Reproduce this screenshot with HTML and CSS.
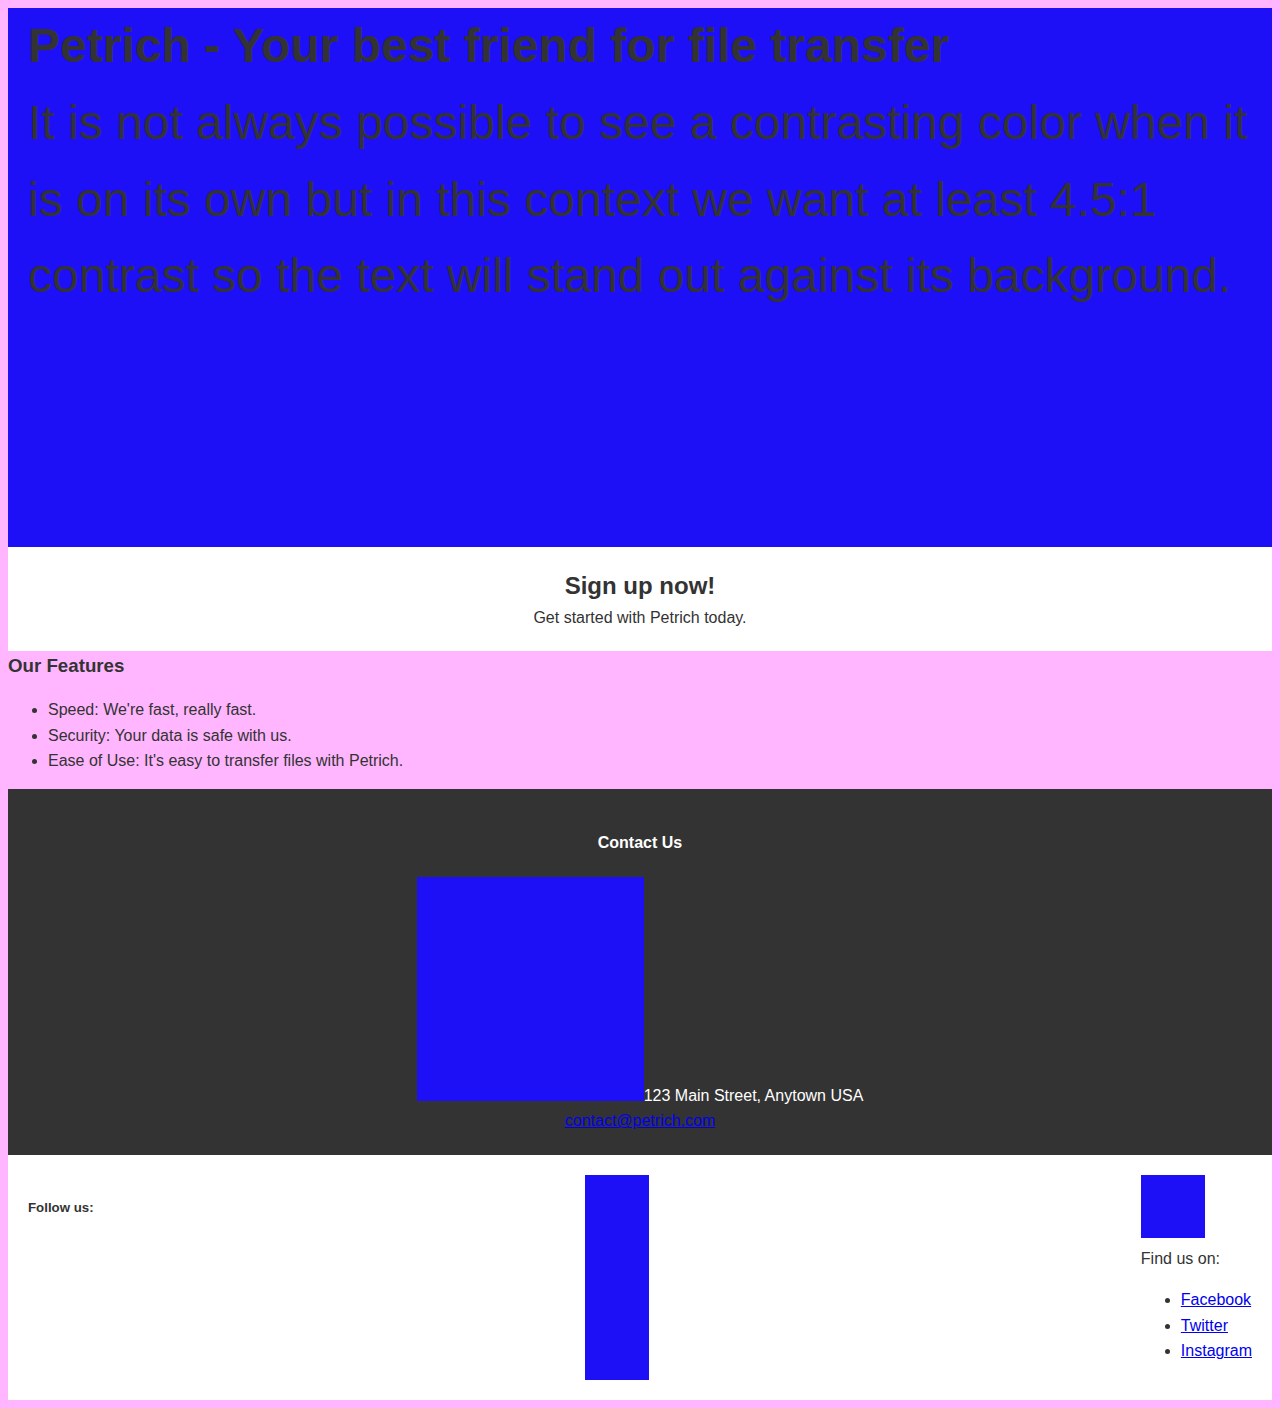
FILE: index.html
```html
<!DOCTYPE html>
<html lang="en">
<head>
<meta charset="utf-8">
<title>Petrich</title>
<link rel="stylesheet" href="styles.css">
</head>
<body>
<header class="hero">
  <h1 class="hero-title">Petrich - Your best friend for file transfer</h1>
  <p class="hero-text">It is not always possible to see a contrasting color when it is on its own but in this context we want at least 4.5:1 contrast so the text will stand out against its background.</p>
</header>
<section class="signup">
  <h2 class="signup-title">Sign up now!</h2>
  <p class="signup-text">Get started with Petrich today.</p>
</section>
<section class="features">
  <h3 class="features-title">Our Features</h3>
  <ul class="features-list">
    <li>Speed: We're fast, really fast.</li>
    <li>Security: Your data is safe with us.</li>
    <li>Ease of Use: It's easy to transfer files with Petrich.</li>
  </ul>
</section>
<footer class="contact">
  <h4 class="contact-title">Contact Us</h4>
  <div class="contact-info"><span class="contact-img"></span>123 Main Street, Anytown USA<br><a href="#">contact@petrich.com</a></div>
</footer>
<div class="social">
  <h5 class="social-title">Follow us:</h5>
  <div class="social-bar"></div>
  <div class="social-links">
    <div class="social-logo-line"><span class="social-logo"></span></div>
    <p class="social-text">Find us on:</p>
    <ul class="social-list">
      <li><a href="#">Facebook</a></li>
      <li><a href="#">Twitter</a></li>
      <li><a href="#">Instagram</a></li>
    </ul>
  </div>
</div>
</body>
</html>
```
FILE: styles.css
```css
body {
  margin: 8px;
  background: #ffb6ff;
  color: #333333;
  font-family: "Liberation Sans", Arial, sans-serif;
  font-size: 16px;
  line-height: 1.6;
}

.hero {
  background: #1e10f6;
  padding: 0 20px;
  min-height: 539px;
  box-sizing: border-box;
}

.hero-title {
  margin: 0;
  font-size: 48px;
  font-weight: bold;
}

.hero-text {
  margin: 0;
  font-size: 48px;
}

.signup {
  background: #ffffff;
  padding: 20px;
  text-align: center;
}

.signup-title {
  margin: 0;
  font-size: 24px;
}

.signup-text {
  margin: 0;
}

.features-title {
  margin: 0;
  font-size: 18.72px;
}

.features-list {
  margin: 16px 0 15px;
  padding-left: 40px;
}

.contact {
  background: #333333;
  color: #ffffff;
  padding: 20px 20px 21px;
  text-align: center;
}

.contact-title {
  margin: 21.28px 0;
  font-size: 16px;
}

.contact-img {
  display: inline-block;
  width: 227px;
  height: 224px;
  background: #1e10f6;
}

.contact-info a {
  color: #0000ee;
}

.social {
  background: #ffffff;
  padding: 20px;
  display: flex;
  justify-content: space-between;
  align-items: stretch;
}

.social-title {
  margin: 22.1px 0;
  font-size: 13.28px;
}

.social-bar {
  width: 64px;
  background: #1e10f6;
}

.social-logo {
  display: inline-block;
  width: 64px;
  height: 63px;
  background: #1e10f6;
}

.social-text {
  margin: 0;
}

.social-list {
  margin: 16px 0;
  padding-left: 40px;
}

.social-list a {
  color: #0000ee;
}
```
